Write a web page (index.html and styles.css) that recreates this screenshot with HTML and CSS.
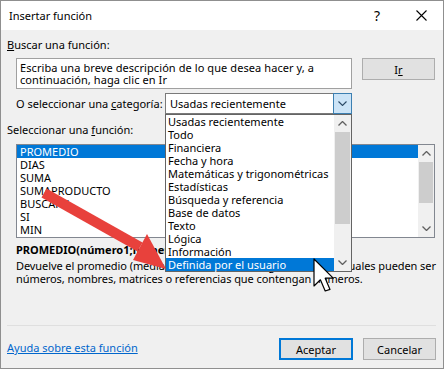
FILE: index.html
```html
<!DOCTYPE html>
<html lang="es">
<head>
    <meta charset="UTF-8">
    <title>Insertar función</title>
    <link rel="stylesheet" href="styles.css">
</head>
<body>
    <div class="dialog">
        <div class="titlebar">
            <span class="title">Insertar función</span>
            <span class="tb-btn tb-help">?</span>
            <span class="tb-btn">
                <svg width="11" height="11" viewBox="0 0 11 11"><path d="M0.5 0.5 L10.5 10.5 M10.5 0.5 L0.5 10.5" stroke="#000" stroke-width="1.1" fill="none"/></svg>
            </span>
        </div>

        <div class="content">
            <div class="label"><u>B</u>uscar una función:</div>

            <div class="search-row">
                <div class="search-box">Escriba una breve descripción de lo que desea hacer y, a<br>continuación, haga clic en Ir</div>
                <button class="btn">I<u>r</u></button>
            </div>

            <div class="cat-row">
                <span class="cat-label">O seleccionar una <u>c</u>ategoría:</span>
                <div class="combo">
                    <span class="combo-text">Usadas recientemente</span>
                    <span class="combo-btn">
                        <svg width="9" height="5" viewBox="0 0 9 5"><polyline points="0.5,0.5 4.5,4.5 8.5,0.5" stroke="#2b4a66" stroke-width="1.1" fill="none"/></svg>
                    </span>

                    <!-- open category list -->
                    <div class="dropdown">
                        <ul class="items">
                            <li>Usadas recientemente</li>
                            <li>Todo</li>
                            <li>Financiera</li>
                            <li>Fecha y hora</li>
                            <li>Matemáticas y trigonométricas</li>
                            <li>Estadísticas</li>
                            <li>Búsqueda y referencia</li>
                            <li>Base de datos</li>
                            <li>Texto</li>
                            <li>Lógica</li>
                            <li>Información</li>
                            <li class="selected">Definida por el usuario</li>
                        </ul>
                        <div class="scrollbar">
                            <span class="sb-arrow"><svg width="9" height="5" viewBox="0 0 9 5"><polyline points="0.5,4.5 4.5,0.5 8.5,4.5" stroke="#606060" stroke-width="1.3" fill="none"/></svg></span>
                            <span class="sb-thumb dd-thumb"></span>
                            <span class="sb-space"></span>
                            <span class="sb-arrow"><svg width="9" height="5" viewBox="0 0 9 5"><polyline points="0.5,0.5 4.5,4.5 8.5,0.5" stroke="#606060" stroke-width="1.3" fill="none"/></svg></span>
                        </div>
                    </div>
                </div>
            </div>

            <div class="label fn-label">Seleccionar una <u>f</u>unción:</div>

            <div class="fn-list">
                <ul class="items">
                    <li class="selected">PROMEDIO</li>
                    <li>DIAS</li>
                    <li>SUMA</li>
                    <li>SUMAPRODUCTO</li>
                    <li>BUSCARV</li>
                    <li>SI</li>
                    <li>MIN</li>
                </ul>
                <div class="scrollbar">
                    <span class="sb-arrow"><svg width="9" height="5" viewBox="0 0 9 5"><polyline points="0.5,4.5 4.5,0.5 8.5,4.5" stroke="#606060" stroke-width="1.3" fill="none"/></svg></span>
                    <span class="sb-thumb fn-thumb"></span>
                    <span class="sb-space"></span>
                    <span class="sb-arrow"><svg width="9" height="5" viewBox="0 0 9 5"><polyline points="0.5,0.5 4.5,4.5 8.5,0.5" stroke="#606060" stroke-width="1.3" fill="none"/></svg></span>
                </div>
            </div>

            <div class="signature">PROMEDIO(número1;número2;...)</div>
            <p class="desc">Devuelve el promedio (media aritmética) de los argumentos, los cuales pueden ser<br>números, nombres, matrices o referencias que contengan números.</p>
        </div>

        <div class="footer">
            <a class="help-link" href="#">Ayuda sobre esta función</a>
            <button class="btn btn-default">Aceptar</button>
            <button class="btn">Cancelar</button>
        </div>

        <!-- annotation: red arrow and mouse pointer drawn over the dialog -->
        <svg class="overlay" width="444" height="369" viewBox="0 0 444 369">
            <polygon points="46.5,188.6 142.5,242.6 137.5,251.4 41.5,197.4" fill="#e8413c"/>
            <polygon points="147,234 133,260 166,269" fill="#e8413c"/>
            <path d="M314 259 L314 286 L320.4 279.8 L325.2 291 L330 289.4 L325.2 278.2 L333.2 278.2 Z" fill="#fff" stroke="#000" stroke-width="1.2" stroke-linejoin="round"/>
        </svg>
    </div>
</body>
</html>
```

FILE: styles.css
```css
body {
    margin: 0;
    font-family: "Noto Sans", sans-serif;
    font-size: 11px;
    color: #000;
}

.dialog {
    position: relative;
    width: 444px;
    height: 369px;
    box-sizing: border-box;
    border: 1px solid #8f8f8f;
    background: #f0f0f0;
    display: flex;
    flex-direction: column;
    overflow: hidden;
}

.titlebar {
    height: 29px;
    background: #fff;
    display: flex;
    align-items: center;
    padding-left: 8px;
}

.title {
    flex: 1;
}

.tb-btn {
    width: 44px;
    display: flex;
    justify-content: center;
    align-items: center;
}

.tb-help {
    font-size: 14px;
}

.content {
    flex: 1;
    padding: 7px 7px 0 6px;
}

.label {
    line-height: 15px;
}

.fn-label {
    margin-top: 8px;
}

.search-row {
    display: flex;
    align-items: flex-start;
    gap: 10px;
    margin: 6px 0 0 9px;
}

.search-box {
    width: 336px;
    height: 31px;
    box-sizing: border-box;
    border: 1px solid #a0a0a0;
    background: #fff;
    padding: 3px 3px;
    line-height: 12px;
    letter-spacing: 0.08px;
}

.btn {
    width: 73px;
    height: 22px;
    box-sizing: border-box;
    border: 1px solid #adadad;
    background: #e1e1e1;
    font-family: inherit;
    font-size: 11px;
    color: #000;
    padding: 0;
}

.btn-default {
    width: 74px;
    border: 2px solid #0078d7;
    margin-right: 10px;
}

.cat-row {
    display: flex;
    align-items: center;
    margin: 4px 0 0 9px;
}

.cat-label {
    width: 149px;
}

.combo {
    position: relative;
    width: 187px;
    height: 21px;
    box-sizing: border-box;
    border: 1px solid #7a7a7a;
    background: #fff;
    display: flex;
    align-items: center;
}

.combo-text {
    flex: 1;
    padding-left: 4px;
}

.combo-btn {
    align-self: stretch;
    width: 17px;
    margin: -1px -1px -1px 0;
    border: 1px solid #3c7fb1;
    background: #cce4f7;
    display: flex;
    justify-content: center;
    align-items: center;
}

.dropdown {
    position: absolute;
    top: 20px;
    left: -1px;
    width: 187px;
    height: 158px;
    box-sizing: border-box;
    border: 1px solid #646464;
    background: #fff;
    display: flex;
    z-index: 2;
}

.items {
    flex: 1;
    list-style: none;
    margin: 0;
    padding: 0;
}

.items li {
    height: 13px;
    line-height: 13px;
    padding-left: 2px;
    white-space: nowrap;
}

.items li.selected {
    background: #0078d7;
    color: #fff;
}

.scrollbar {
    width: 17px;
    background: #f0f0f0;
    display: flex;
    flex-direction: column;
}

.sb-arrow {
    height: 17px;
    display: flex;
    justify-content: center;
    align-items: center;
}

.sb-thumb {
    margin: 0 1px;
    background: #cdcdcd;
}

.dd-thumb {
    height: 92px;
}

.fn-thumb {
    height: 41px;
}

.sb-space {
    flex: 1;
}

.fn-list {
    width: 419px;
    height: 94px;
    box-sizing: border-box;
    margin: 7px 0 0 9px;
    border: 1px solid #828790;
    background: #fff;
    display: flex;
}

.fn-list .items li {
    padding-left: 3px;
}

.fn-list .scrollbar {
    width: 16px;
}

.signature {
    margin: 4px 0 0 9px;
    line-height: 15px;
    font-weight: bold;
}

.desc {
    margin: 2px 0 0 9px;
    line-height: 13px;
    white-space: nowrap;
    letter-spacing: -0.08px;
}

.footer {
    margin: 0 7px 0 6px;
    border-top: 1px solid #dfdfdf;
    padding: 12px 0 8px;
    display: flex;
    align-items: center;
}

.help-link {
    flex: 1;
    color: #0066cc;
    margin-top: -3px;
}

.overlay {
    position: absolute;
    top: -1px;
    left: -1px;
    z-index: 3;
    pointer-events: none;
}
```
